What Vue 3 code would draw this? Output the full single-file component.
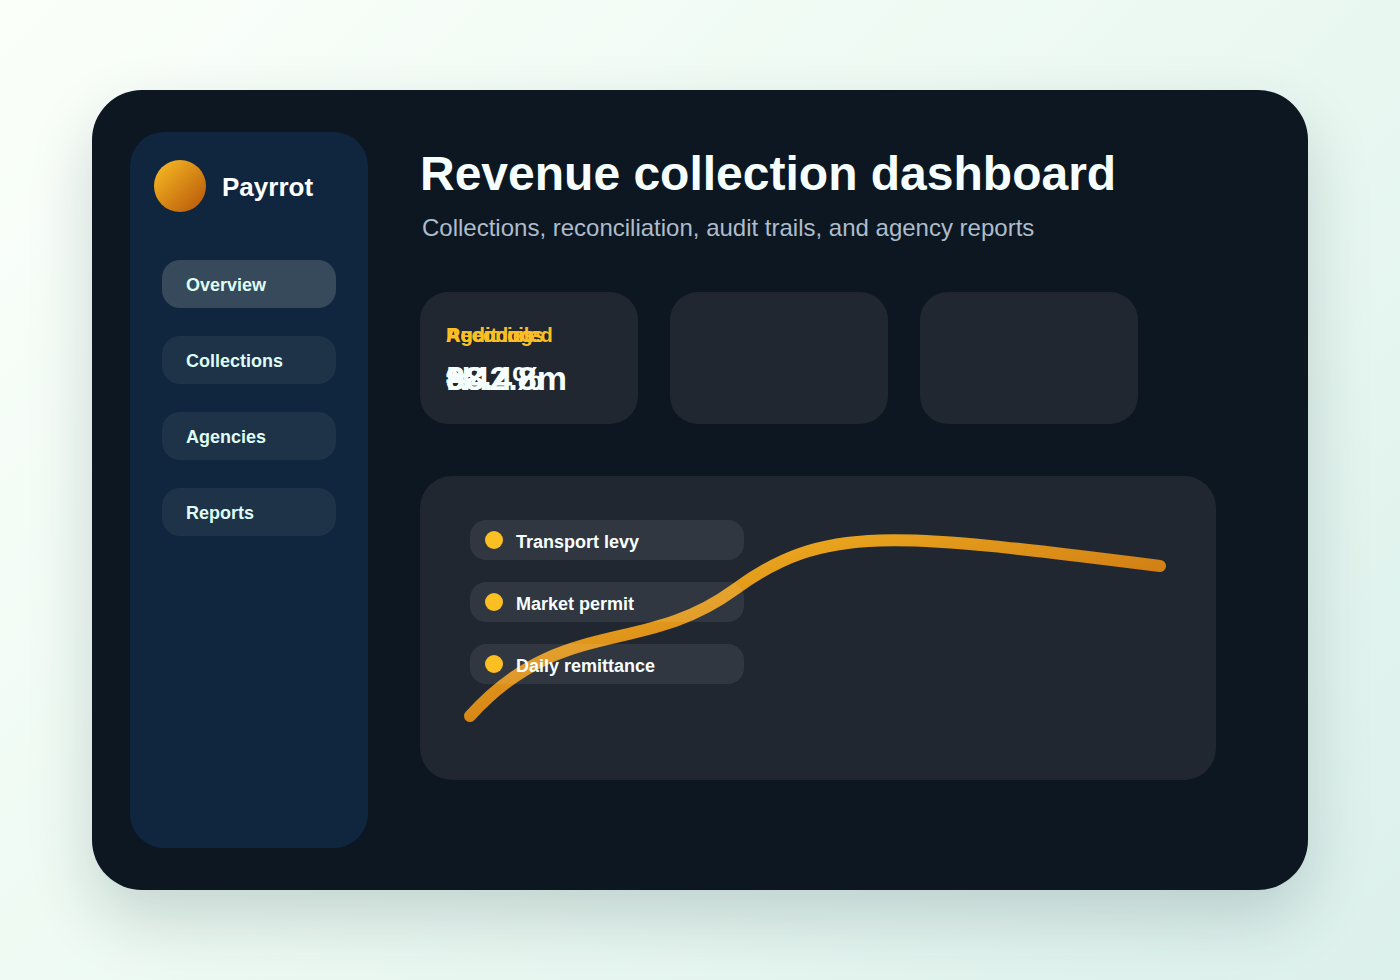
<script setup>
import { ref } from 'vue'

const navItems = ['Overview', 'Collections', 'Agencies', 'Reports']
const active = ref('Overview')
const metrics = [
  { label: 'Reconciled', value: '98.4%' },
  { label: 'Agencies', value: '38' },
  { label: 'Audit logs', value: '₦42.8m' },
]
const streams = ['Transport levy', 'Market permit', 'Daily remittance']
</script>

<template>
  <div class="page">
    <div class="shell">
      <aside class="sidebar">
        <div class="brand">
          <span class="logo"></span>
          <span class="brand-name">Payrrot</span>
        </div>
        <nav class="nav">
          <button
            v-for="item in navItems"
            :key="item"
            type="button"
            class="nav-item"
            :class="{ active: item === active }"
            @click="active = item"
          >{{ item }}</button>
        </nav>
      </aside>

      <main class="main">
        <header>
          <h1>Revenue collection dashboard</h1>
          <p class="subtitle">Collections, reconciliation, audit trails, and agency reports</p>
        </header>

        <section class="cards">
          <div class="card">
            <dl v-for="m in metrics" :key="m.label" class="metric">
              <dt>{{ m.label }}</dt>
              <dd>{{ m.value }}</dd>
            </dl>
          </div>
          <div class="card"></div>
          <div class="card"></div>
        </section>

        <section class="panel">
          <svg class="trend" viewBox="0 0 796 304" preserveAspectRatio="none" aria-hidden="true">
            <defs>
              <linearGradient id="trend-gold" x1="0" y1="0" x2="1" y2="1">
                <stop offset="0" stop-color="#fbbf24" />
                <stop offset="1" stop-color="#b45309" />
              </linearGradient>
            </defs>
            <path
              d="M50 240C140 140 224 180 314 114S470 56 740 90"
              fill="none"
              stroke="url(#trend-gold)"
              stroke-width="12"
              stroke-linecap="round"
            />
          </svg>
          <ul class="streams">
            <li v-for="s in streams" :key="s">
              <span class="dot"></span>
              <span class="stream-name">{{ s }}</span>
            </li>
          </ul>
        </section>
      </main>
    </div>
  </div>
</template>

<style>
body {
  margin: 0;
}
</style>

<style scoped>
* {
  box-sizing: border-box;
}
.page {
  min-height: 100vh;
  padding: 90px 92px;
  display: flex;
  font-family: "Liberation Sans", Arial, sans-serif;
  background: linear-gradient(135deg, #fbfffa 0%, #ecf9f2 50%, #dcf0ec 100%);
}
.shell {
  flex: 1;
  min-width: 0;
  display: flex;
  gap: 52px;
  padding: 42px 92px 42px 38px;
  border-radius: 50px;
  background: #0c1722;
  box-shadow: 0 28px 64px rgba(15, 50, 55, 0.18);
}
.sidebar {
  flex: 0 0 238px;
  padding: 28px 24px;
  border-radius: 34px;
  background: #10263e;
}
.brand {
  display: flex;
  align-items: center;
  gap: 16px;
}
.logo {
  width: 52px;
  height: 52px;
  border-radius: 50%;
  background: linear-gradient(135deg, #fbbf24, #b45309);
}
.brand-name {
  padding-top: 2px;
  font-size: 26px;
  line-height: 30px;
  font-weight: 700;
  color: #ffffff;
}
.nav {
  display: flex;
  flex-direction: column;
  gap: 28px;
  margin: 48px 8px 0;
}
.nav-item {
  height: 48px;
  padding: 2px 24px 0;
  border: 0;
  border-radius: 18px;
  background: #1e3348;
  color: #dffcf5;
  font-family: inherit;
  font-size: 18px;
  font-weight: 700;
  text-align: left;
  cursor: pointer;
}
.nav-item.active {
  background: #374a5b;
}
.main {
  flex: 1;
  min-width: 0;
  padding-top: 14px;
}
h1 {
  margin: 0;
  font-size: 48px;
  line-height: 56px;
  font-weight: 700;
  color: #f6fffd;
}
.subtitle {
  margin: 12px 2px 0;
  font-size: 24px;
  line-height: 28px;
  color: #aebccb;
}
.cards {
  display: grid;
  grid-template-columns: repeat(3, minmax(0, 1fr));
  gap: 32px;
  margin: 50px 78px 0 0;
}
.card {
  display: grid;
  align-content: start;
  min-height: 132px;
  padding: 32px 26px 26px;
  border-radius: 28px;
  background: #202731;
}
.metric {
  grid-area: 1 / 1;
  margin: 0;
  font-weight: 700;
}
.metric dt {
  font-size: 20px;
  line-height: 22px;
  color: #fbbf24;
}
.metric dd {
  margin: 12px 0 0;
  font-size: 34px;
  line-height: 40px;
  color: #f6fffd;
}
.panel {
  position: relative;
  min-height: 304px;
  margin-top: 52px;
  padding: 44px 50px;
  border-radius: 32px;
  background: #202731;
}
.trend {
  position: absolute;
  inset: 0;
  width: 100%;
  height: 100%;
}
.streams {
  position: relative;
  display: grid;
  gap: 22px;
  max-width: 274px;
  margin: 0;
  padding: 0;
  list-style: none;
}
.streams li {
  display: flex;
  align-items: center;
  gap: 13px;
  height: 40px;
  padding: 0 15px;
  border-radius: 16px;
  background: rgba(255, 255, 255, 0.08);
}
.dot {
  width: 18px;
  height: 18px;
  border-radius: 50%;
  background: #fbbf24;
}
.stream-name {
  padding-top: 3px;
  font-size: 18px;
  line-height: 20px;
  font-weight: 700;
  color: #f6fffd;
}
</style>
